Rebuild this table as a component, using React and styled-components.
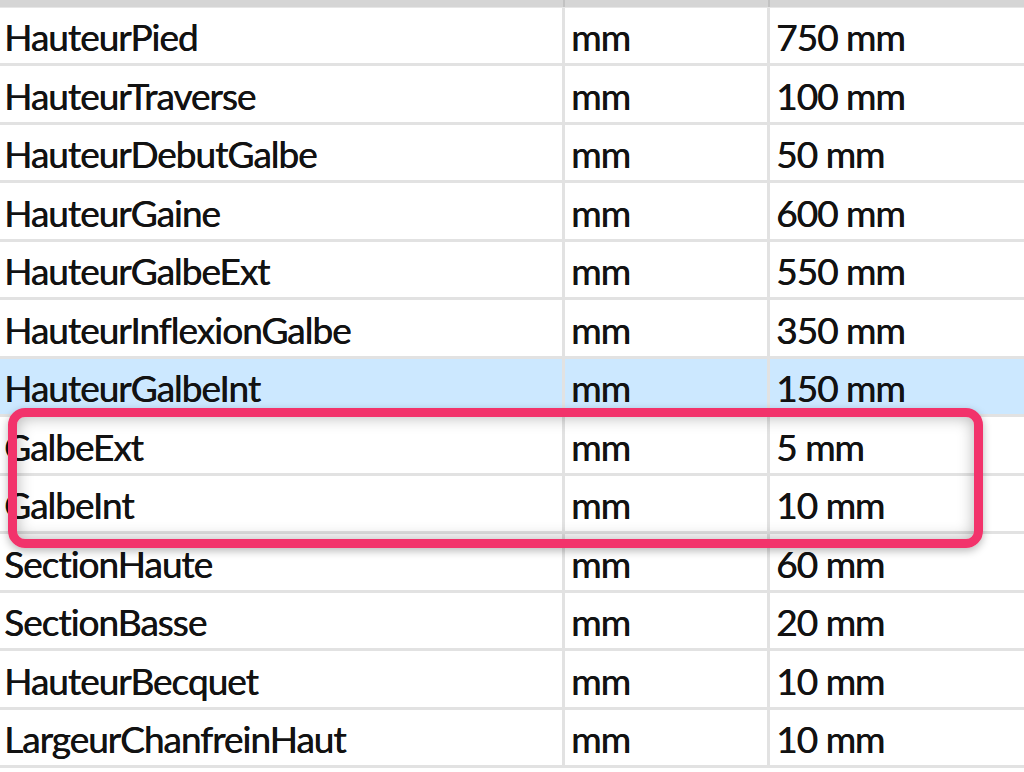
import styled, { createGlobalStyle } from 'styled-components'

const GlobalStyle = createGlobalStyle`
  * {
    box-sizing: border-box;
  }

  html, body {
    margin: 0;
    padding: 0;
    background: #fff;
    overflow: hidden;
  }

  body {
    font-family: Lato, "Open Sans", sans-serif;
    color: #121212;
  }
`

const Table = styled.div`
  width: 1024px;
  height: 772px;
  display: flex;
  flex-direction: column;
`

const Header = styled.div`
  flex: none;
  height: 7.5px;
  display: grid;
  grid-template-columns: 565px 205px 1fr;
  background: #d5d5d5;
  border-bottom: 1px solid #e6e6e6;
`

const HeaderCell = styled.div`
  border-right: ${p => (p.$last ? 'none' : '2px solid #c2c2c2')};
`

const Row = styled.div`
  flex: none;
  height: 58.5px;
  display: grid;
  grid-template-columns: 565px 205px 1fr;
  border-bottom: 3px solid #e2e2e2;
  background: ${p => (p.$selected ? '#cce8ff' : '#fff')};
`

const Cell = styled.div`
  display: flex;
  align-items: center;
  padding: 3px 0 0 ${p => (p.$first ? '4px' : '6px')};
  border-right: ${p => (p.$last ? 'none' : '3px solid #e2e2e2')};
  font-size: 37px;
  letter-spacing: -1px;
  text-shadow: 0.5px 0 0 currentColor;
  white-space: nowrap;
  overflow: hidden;
`

const Marked = styled.div`
  position: relative;
  flex: none;

  &::after {
    content: '';
    position: absolute;
    top: -9px;
    bottom: -14px;
    left: 8px;
    right: 41px;
    border: 9px solid #f2336b;
    border-radius: 17px;
    box-shadow:
      inset 0 0 16px rgba(0, 0, 0, 0.3),
      0 3px 8px rgba(0, 0, 0, 0.28);
    pointer-events: none;
  }
`

const params = [
  ['HauteurPied', '750 mm'],
  ['HauteurTraverse', '100 mm'],
  ['HauteurDebutGalbe', '50 mm'],
  ['HauteurGaine', '600 mm'],
  ['HauteurGalbeExt', '550 mm'],
  ['HauteurInflexionGalbe', '350 mm'],
  ['HauteurGalbeInt', '150 mm', 'selected'],
  ['GalbeExt', '5 mm', 'marked'],
  ['GalbeInt', '10 mm', 'marked'],
  ['SectionHaute', '60 mm'],
  ['SectionBasse', '20 mm'],
  ['HauteurBecquet', '10 mm'],
  ['LargeurChanfreinHaut', '10 mm'],
]

function ParamRow({ name, value, selected }) {
  return (
    <Row $selected={selected}>
      <Cell $first>{name}</Cell>
      <Cell>mm</Cell>
      <Cell $last>{value}</Cell>
    </Row>
  )
}

function App() {
  const before = params.slice(0, 7)
  const marked = params.slice(7, 9)
  const after = params.slice(9)

  return (
    <Table>
      <GlobalStyle />
      <Header>
        <HeaderCell />
        <HeaderCell />
        <HeaderCell $last />
      </Header>
      {before.map(([name, value, flag]) => (
        <ParamRow key={name} name={name} value={value} selected={flag === 'selected'} />
      ))}
      <Marked>
        {marked.map(([name, value]) => (
          <ParamRow key={name} name={name} value={value} />
        ))}
      </Marked>
      {after.map(([name, value]) => (
        <ParamRow key={name} name={name} value={value} />
      ))}
    </Table>
  )
}

export default App
